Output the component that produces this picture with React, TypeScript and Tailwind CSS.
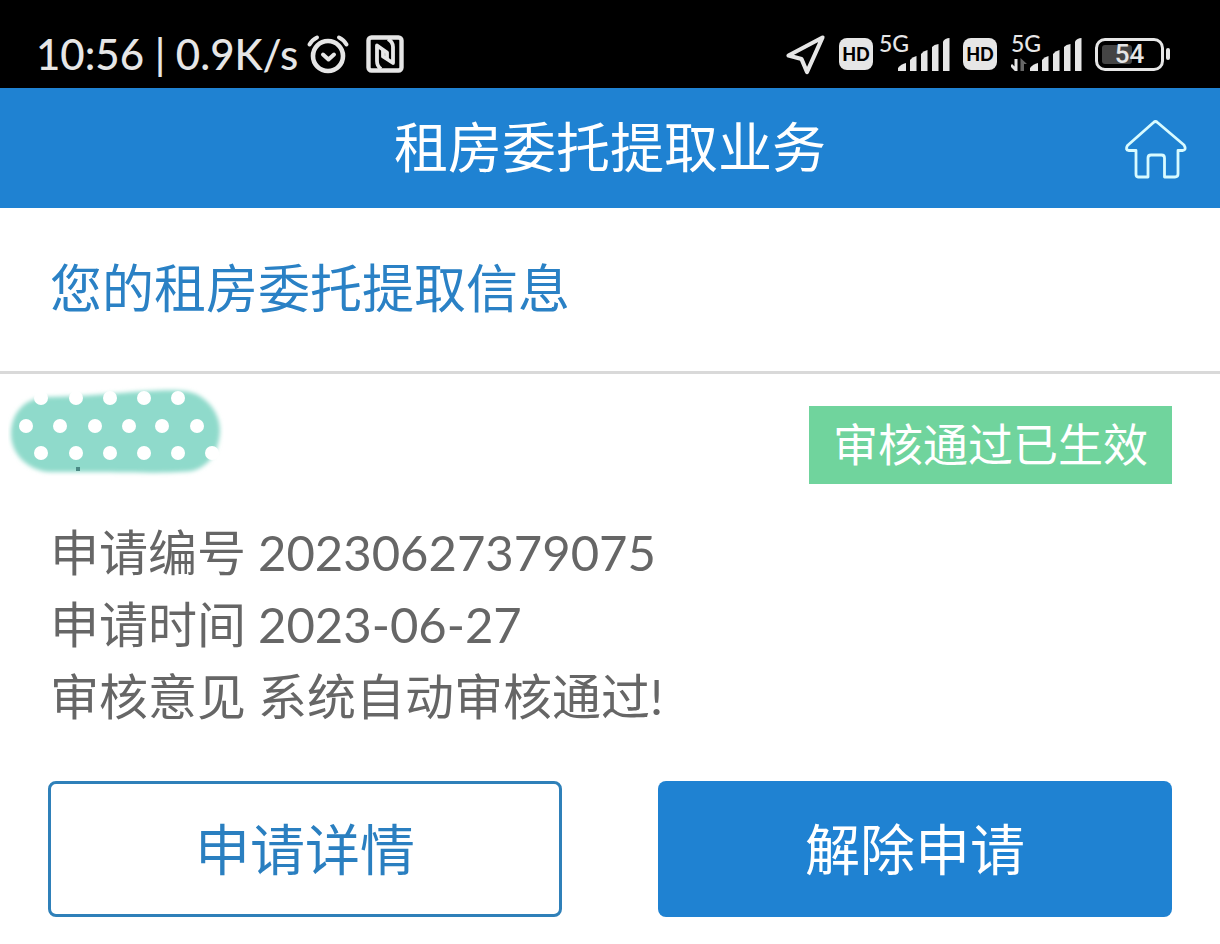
type Detail = {
  label: string;
  value: string;
};

const details: Detail[] = [
  { label: '申请编号', value: '20230627379075' },
  { label: '申请时间', value: '2023-06-27' },
  { label: '审核意见', value: '系统自动审核通过!' },
];

const stickerDots = [
  [33, 12], [68, 12], [102, 12], [136, 12], [170, 12],
  [18, 40], [52, 40], [87, 40], [121, 40], [154, 40], [189, 40],
  [33, 67], [68, 67], [102, 67], [136, 67], [170, 67], [204, 67],
];

const AlarmIcon = () => (
  <svg className="w-[44px] h-[40px]" viewBox="0 0 44 40" fill="none" stroke="currentColor" strokeWidth="4.6" strokeLinecap="round" strokeLinejoin="round">
    <circle cx="22" cy="22" r="15" />
    <path d="M17 20.500l5.500 5 5.500-5" strokeWidth="4" />
    <path d="M3.500 10.500Q6 6 11 3.500M40.500 10.500Q38 6 33 3.500" strokeWidth="4" />
  </svg>
);

const NfcIcon = () => (
  <svg className="w-[38px] h-[38px]" viewBox="0 0 38 38" fill="none" stroke="currentColor" strokeLinejoin="round">
    <rect x="2.5" y="2.5" width="33" height="33" rx="3" strokeWidth="4.4" />
    <path d="M15 34Q11 31 11 26V10.500L21 17.500V24" strokeWidth="3.8" />
    <path d="M22 4Q27 7 27 12V28L17 21.500V15" strokeWidth="3.8" />
  </svg>
);

const LocationIcon = () => (
  <svg className="w-[42px] h-[42px]" viewBox="0 0 42 42" fill="none" stroke="currentColor" strokeWidth="4.2" strokeLinejoin="round">
    <path d="M37.500 4.500L3.500 22.500L16.500 26L22 39Z" />
  </svg>
);

const HdBadge = () => (
  <span className="flex items-center justify-center w-[34px] h-[32px] rounded-lg bg-[#e6e6e6] text-black text-[18px] leading-none font-black">
    HD
  </span>
);

const Signal = ({ transfer = false }: { transfer?: boolean }) => (
  <div className="relative w-[72px] h-[38px]">
    <span className="absolute left-0 -top-1 text-[23px] leading-[24px] font-medium">5G</span>
    <svg className="w-full h-full" viewBox="0 0 72 38" fill="currentColor">
      {transfer && (
        <>
          <path d="M5 24v12M5 35L0 30" stroke="currentColor" strokeWidth="3" fill="none" />
          <path d="M9.500 36V23L16 29H13V36Z" fill="#666" />
        </>
      )}
      <path d="M19 36V33Q22 29 27 28V36Z" />
      <path d="M31 36V25Q33 22 37.500 21V36Z" />
      <path d="M42 36V19Q44 16 48.500 15V36Z" />
      <path d="M53 36V12Q55 9.500 59.500 9V36Z" />
      <path d="M64 36V6.500Q66 3 70.500 3V36Z" />
    </svg>
  </div>
);

const Battery = () => (
  <div className="flex items-center gap-[2px]">
    <div className="w-[69px] h-[33px] p-[4px] rounded-[10px] border-[3px] border-[#e6e6e6] relative">
      <div className="w-[30px] h-full rounded-[3px] bg-[#444]" />
      <span className="absolute inset-0 flex items-center justify-center font-['Roboto',sans-serif] text-[26px] leading-none font-medium">54</span>
    </div>
    <div className="w-[4px] h-[12px] rounded-sm bg-[#e6e6e6]" />
  </div>
);

const StatusBar = () => (
  <div className="h-[88px] pt-5 pl-9 pr-[50px] flex items-center justify-between bg-black text-[#e6e6e6]">
    <div className="flex items-center">
      <span className="text-[42px] leading-none font-medium whitespace-nowrap">10:56 | 0.9K/s</span>
      <div className="flex items-center gap-4 ml-2">
        <AlarmIcon />
        <NfcIcon />
      </div>
    </div>
    <div className="flex items-center gap-3">
      <LocationIcon />
      <div className="flex items-center gap-[6px]">
        <HdBadge />
        <Signal />
      </div>
      <div className="flex items-center gap-[14px]">
        <HdBadge />
        <Signal transfer />
      </div>
      <Battery />
    </div>
  </div>
);

const HomeIcon = () => (
  <svg className="w-[64px] h-[64px]" viewBox="0 0 64 64" fill="none" stroke="#d9fbff" strokeWidth="2.8" strokeLinejoin="round" strokeLinecap="round">
    <path d="M29.500 6.500Q31.500 4.500 33.500 6.500L60 29Q63 34 58.500 34.500H54V58Q54 61 51 61H40.500V42Q40.500 39 37.500 39H27Q24 39 24 42V61H14Q12 61 12 58V34.500H5Q.8 34 3.500 29.500Z" />
  </svg>
);

const Sticker = () => (
  <svg className="w-[216px] h-[98px]" viewBox="0 0 216 98">
    <defs>
      <filter id="soft" x="-10%" y="-10%" width="120%" height="120%">
        <feGaussianBlur stdDeviation="2" />
      </filter>
    </defs>
    <path
      d="M38 11C70 11 110 7 140 5C160 4 178 3 190 9C204 17 212 30 212 45C211 64 203 80 184 85C160 88 110 86 80 86H42C20 85 3 68 3 48C3 28 16 12 38 11Z"
      fill="#8fdacb"
      filter="url(#soft)"
    />
    {stickerDots.map(([x, y]) => (
      <circle key={`${x}-${y}`} cx={x} cy={y} r="7" fill="#fff" />
    ))}
    <rect x="68" y="81" width="4" height="4" fill="#4b8a85" />
  </svg>
);

const App = () => {
  return (
    <div className="min-h-screen bg-white font-['Lato','Noto_Sans_CJK_SC',sans-serif]">
      <StatusBar />

      <header className="h-[120px] px-8 grid grid-cols-[64px_1fr_64px] items-center bg-[#1f82d2] text-white">
        <h1 className="col-start-2 text-center text-[54px] leading-[72px]">租房委托提取业务</h1>
        <button type="button" aria-label="首页">
          <HomeIcon />
        </button>
      </header>

      <main>
        <h2 className="px-[50px] pt-11 pb-[47px] border-b-[3px] border-[#d9d9d9] text-[52px] leading-[72px] text-[#2a81c5]">
          您的租房委托提取信息
        </h2>

        <section className="pt-3">
          <div className="flex items-end justify-between pl-2 pr-12">
            <Sticker />
            <span className="px-6 text-[45px] leading-[78px] bg-[#70d49d] text-white">审核通过已生效</span>
          </div>

          <dl className="mt-8 px-[50px] text-[49px] leading-[72px] text-[#666]">
            {details.map((item) => (
              <div key={item.label} className="flex gap-3">
                <dt>{item.label}</dt>
                <dd>{item.value}</dd>
              </div>
            ))}
          </dl>

          <div className="mt-12 px-12 pt-px pb-7 grid grid-cols-2 gap-24 text-[55px] leading-[72px]">
            <button type="button" className="h-[136px] rounded-lg border-[3px] border-[#2f80b9] text-[#2a7fc0]">
              申请详情
            </button>
            <button type="button" className="h-[136px] rounded-lg bg-[#1f82d2] text-white">
              解除申请
            </button>
          </div>
        </section>
      </main>
    </div>
  );
};

export default App;
